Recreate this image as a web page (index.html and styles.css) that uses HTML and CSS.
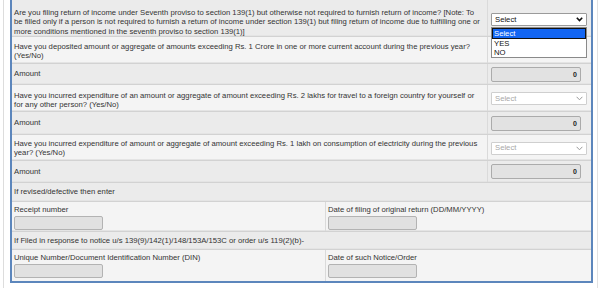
FILE: index.html
```html
<!DOCTYPE html>
<html>
<head>
<meta charset="utf-8">
<link rel="stylesheet" href="styles.css">
</head>
<body>
<div class="page">
  <div class="frame">
    <div class="row q dark h37">
      <div class="label top8">Are you filing return of income under Seventh proviso to section 139(1) but otherwise not required to furnish return of income? [Note: To<br>be filled only if a person is not required to furnish a return of income under section 139(1) but filing return of income due to fulfilling one or<br>more conditions mentioned in the seventh proviso to section 139(1)]</div>
      <div class="ctl">
        <div class="sel-wrap">
          <div class="select active"><span>Select</span><svg class="chev" width="7" height="5" viewBox="0 0 7 5"><path d="M0.8 0.8 L3.5 3.6 L6.2 0.8" fill="none" stroke="#111" stroke-width="1.6"/></svg></div>
          <div class="dropdown">
            <div class="opt hl">Select</div>
            <div class="opt">YES</div>
            <div class="opt">NO</div>
          </div>
        </div>
      </div>
    </div>
    <div class="row q light h27">
      <div class="label top5">Have you deposited amount or aggregate of amounts exceeding Rs. 1 Crore in one or more current account during the previous year?<br>(Yes/No)</div>
      <div class="ctl"></div>
    </div>
    <div class="row q dark h21">
      <div class="label mid">Amount</div>
      <div class="ctl"><div class="amount">0</div></div>
    </div>
    <div class="row q light h27">
      <div class="label top6">Have you incurred expenditure of an amount or aggregate of amount exceeding Rs. 2 lakhs for travel to a foreign country for yourself or<br>for any other person? (Yes/No)</div>
      <div class="ctl"><div class="select disabled"><span>Select</span><svg class="chev" width="7" height="5" viewBox="0 0 7 5"><path d="M0.6 0.8 L3.5 3.8 L6.4 0.8" fill="none" stroke="#9a9a9a" stroke-width="1"/></svg></div></div>
    </div>
    <div class="row q dark h23">
      <div class="label mid">Amount</div>
      <div class="ctl"><div class="amount">0</div></div>
    </div>
    <div class="row q light h26">
      <div class="label top4">Have you incurred expenditure of amount or aggregate of amount exceeding Rs. 1 lakh on consumption of electricity during the previous<br>year? (Yes/No)</div>
      <div class="ctl"><div class="select disabled"><span>Select</span><svg class="chev" width="7" height="5" viewBox="0 0 7 5"><path d="M0.6 0.8 L3.5 3.8 L6.4 0.8" fill="none" stroke="#9a9a9a" stroke-width="1"/></svg></div></div>
    </div>
    <div class="row q dark h22">
      <div class="label mid">Amount</div>
      <div class="ctl"><div class="amount">0</div></div>
    </div>
    <div class="row full dark h19">
      <div class="label mid">If revised/defective then enter</div>
    </div>
    <div class="row pair light h30">
      <div class="field">
        <div class="flabel">Receipt number</div>
        <div class="box"></div>
      </div>
      <div class="field right">
        <div class="flabel">Date of filing of original return (DD/MM/YYYY)</div>
        <div class="box"></div>
      </div>
    </div>
    <div class="row full dark h18">
      <div class="label mid">If Filed in response to notice u/s 139(9)/142(1)/148/153A/153C or order u/s 119(2)(b)-</div>
    </div>
    <div class="row pair light h31 last">
      <div class="field">
        <div class="flabel">Unique Number/Document Identification Number (DIN)</div>
        <div class="box"></div>
      </div>
      <div class="field right">
        <div class="flabel">Date of such Notice/Order</div>
        <div class="box"></div>
      </div>
    </div>
  </div>
</div>
</body>
</html>
```

FILE: styles.css
```css
* { box-sizing: border-box; }
html, body { margin: 0; padding: 0; background: #ffffff; }
body {
  font-family: "Liberation Sans", Arial, sans-serif;
  font-size: 7.7px;
  line-height: 9.3px;
  color: #333333;
}
.page {
  margin-left: 3px;
  width: 595px;
  padding: 0 4px 5px 6px;
  border-left: 1px solid #dddddd;
  border-right: 1px solid #e2e2e2;
}
.frame {
  border: 2px solid #5c86bc;
  border-top: none;
  width: 583px;
}
.row {
  display: grid;
  border-bottom: 1px solid #d2d2d2;
  box-shadow: inset 0 -1px 0 #e4e4e4;
}
.row.last { border-bottom: none; box-shadow: none; }
.q { grid-template-columns: 476px 1fr; }
.pair { grid-template-columns: 314px 1fr; }
.full { grid-template-columns: 1fr; }
.dark { background: #ebebeb; }
.light { background: #f4f4f4; }
.h37 { height: 37px; }
.h27 { height: 27px; }
.h21 { height: 21px; }
.h23 { height: 23px; }
.h26 { height: 26px; }
.h22 { height: 22px; }
.h19 { height: 19px; }
.h30 { height: 30px; }
.h18 { height: 18px; }
.h31 { height: 31px; }
.label {
  padding-left: 2px;
  white-space: nowrap;
  border-right: 1px solid #dadada;
}
.full .label { border-right: none; }
.top8 { padding-top: 8px; }
.top6 { padding-top: 6px; }
.top5 { padding-top: 5px; }
.top4 { padding-top: 4px; }
.mid { display: flex; align-items: center; }
.ctl {
  display: flex;
  align-items: center;
  padding-left: 3px;
}
.sel-wrap { position: relative; margin-top: 3px; }
.select {
  width: 96px;
  height: 13px;
  background: #ffffff;
  display: flex;
  align-items: center;
  justify-content: space-between;
  padding: 0 3px 0 3px;
  border-radius: 1px;
}
.select.active { border: 1px solid #9a9a9a; color: #111111; }
.select.disabled { border: 1px solid #cfcfcf; color: #a8a8a8; margin-top: 1px; }
.chev { display: block; }
.dropdown {
  position: absolute;
  left: 0;
  top: 14px;
  width: 96px;
  height: 31px;
  background: #ffffff;
  border: 1px solid #8a8a8a;
  z-index: 2;
}
.opt {
  height: 9px;
  line-height: 9px;
  padding-left: 2px;
  color: #111111;
}
.opt.hl {
  height: 11px;
  line-height: 9px;
  background: #1366f3;
  color: #ffffff;
  outline: 1px solid #111111;
  outline-offset: -1px;
  padding-top: 1px;
}
.amount {
  width: 90px;
  height: 15px;
  background: #e2e2e2;
  border: 1px solid #ababab;
  border-radius: 2px;
  text-align: right;
  padding-right: 3px;
  font-size: 7px;
  line-height: 13px;
  font-weight: bold;
  color: #222222;
}
.field {
  padding: 3px 0 0 2px;
}
.field:first-child { border-right: 1px solid #dadada; }
.field.right { padding-left: 2px; }
.flabel { height: 10px; white-space: nowrap; }
.box {
  width: 89px;
  height: 14px;
  background: #e1e1e1;
  border: 1px solid #b3b3b3;
  border-radius: 2px;
  margin-top: 1px;
}
```
